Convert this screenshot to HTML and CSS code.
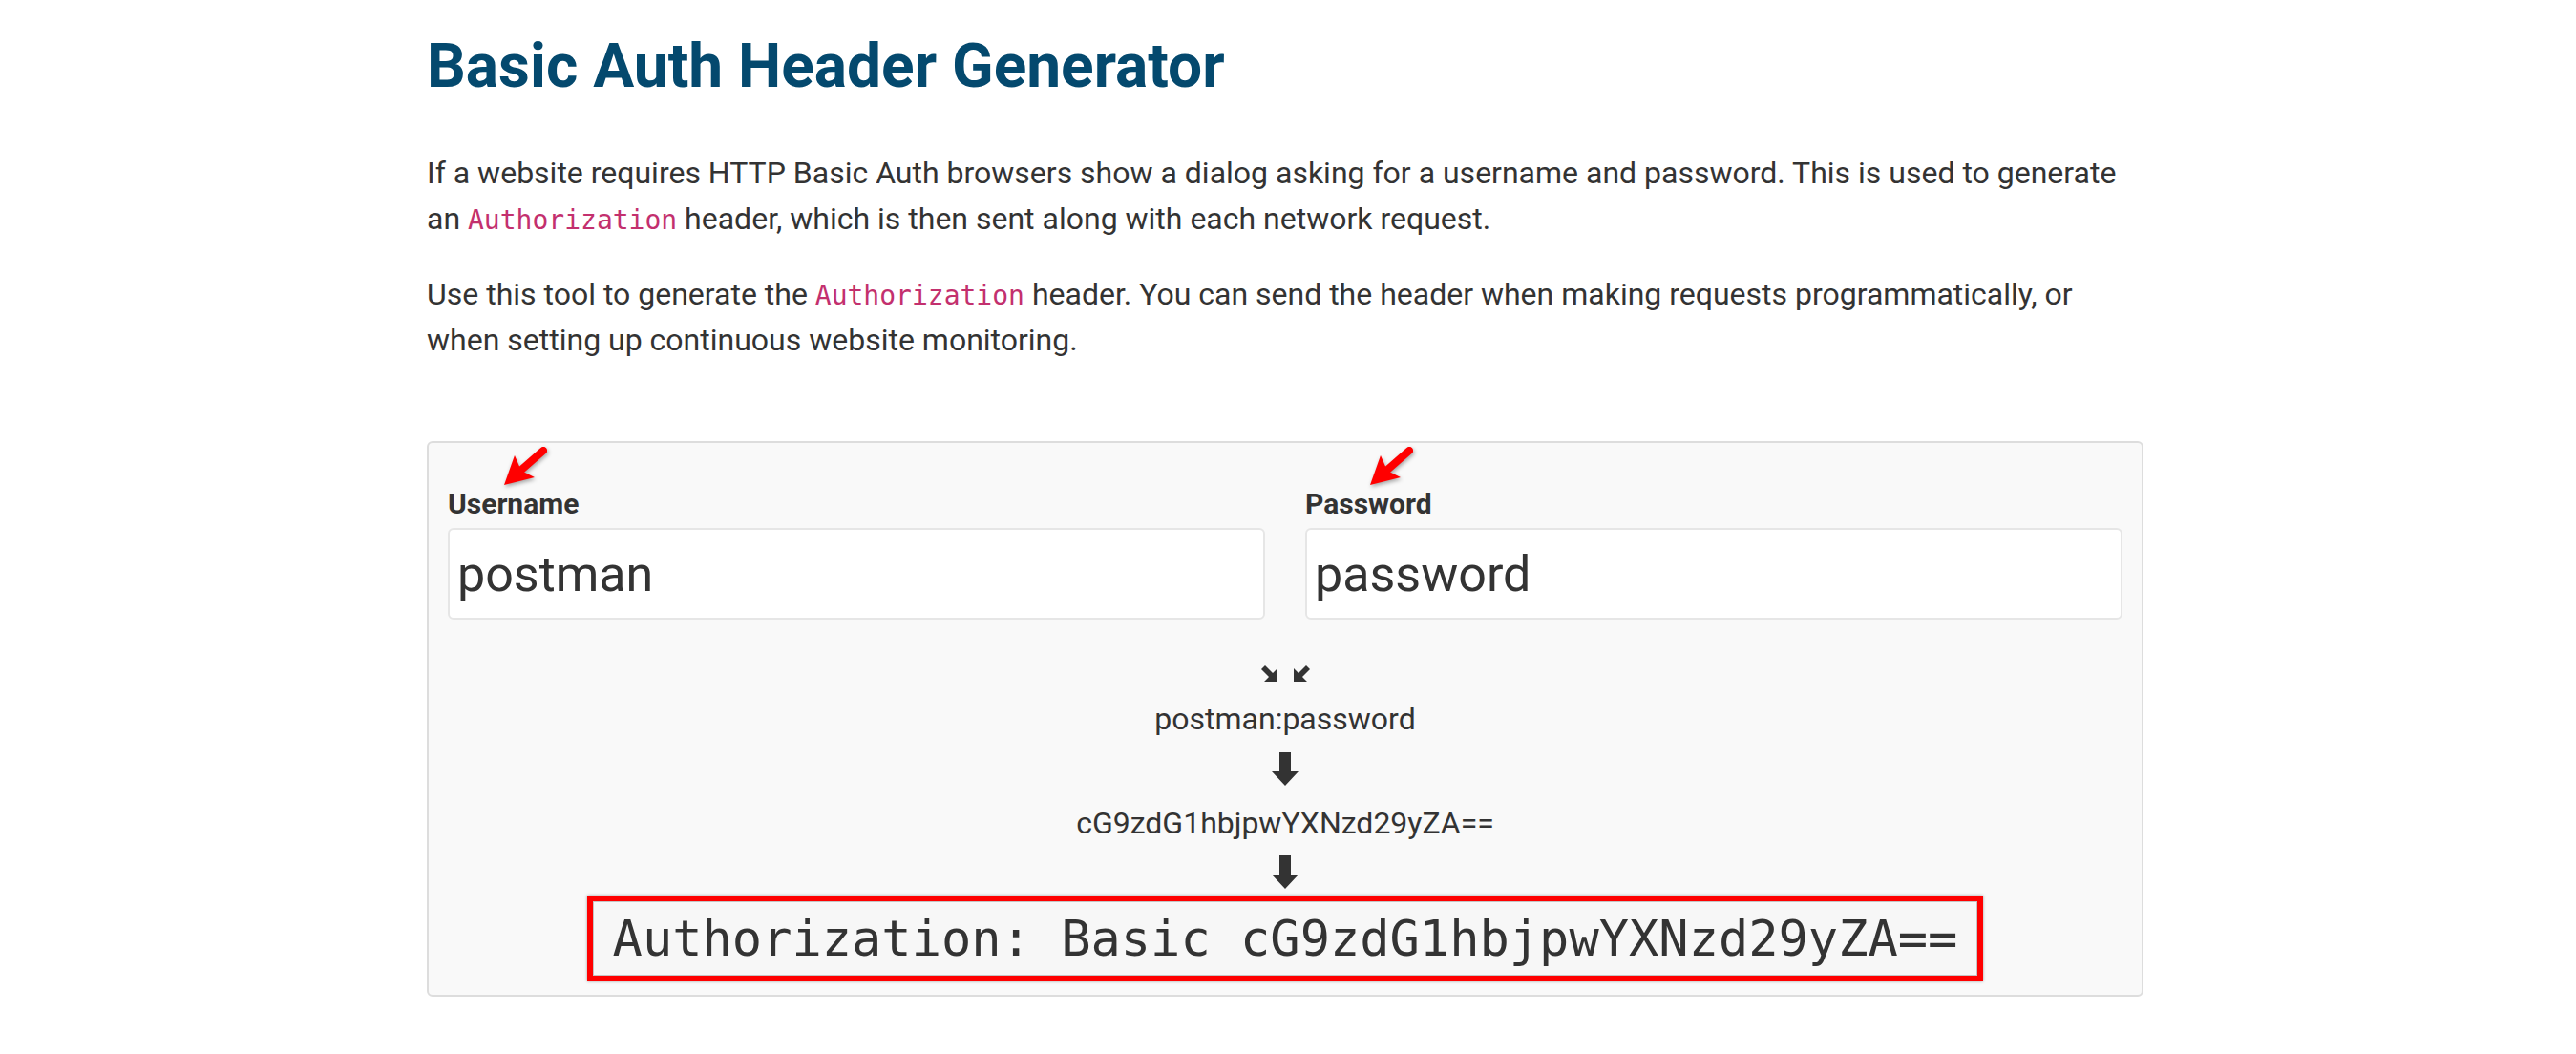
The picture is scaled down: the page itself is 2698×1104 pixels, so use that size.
FILE: index.html
```html
<!DOCTYPE html>
<html lang="en">
<head>
  <meta charset="UTF-8">
  <meta name="viewport" content="width=device-width, initial-scale=1.0">
  <title>Basic Auth Header Generator</title>
  <link rel="stylesheet" href="styles.css">
</head>
<body>
  <div class="page">
    <h1 class="title">Basic Auth Header Generator</h1>

    <p class="lead">If a website requires HTTP Basic Auth browsers show a dialog asking for a username and password. This is used to generate an <code>Authorization</code> header, which is then sent along with each network request.</p>

    <p class="lead">Use this tool to generate the <code>Authorization</code> header. You can send the header when making requests programmatically, or when setting up continuous website monitoring.</p>

    <div class="panel">
      <div class="fields">
        <div class="field">
          <label class="field-label" for="username">Username
            <svg class="pointer pointer--user" width="60" height="50" viewBox="0 0 60 50">
              <line x1="26" y1="31" x2="50" y2="10" stroke="#f00" stroke-width="8" stroke-linecap="round"/>
              <polygon points="9,46 20,15 27,31 41,38" fill="#f00"/>
            </svg>
          </label>
          <input class="field-input" id="username" type="text" value="postman">
        </div>
        <div class="field">
          <label class="field-label" for="password">Password
            <svg class="pointer pointer--pass" width="60" height="50" viewBox="0 0 60 50">
              <line x1="26" y1="31" x2="50" y2="10" stroke="#f00" stroke-width="8" stroke-linecap="round"/>
              <polygon points="9,46 20,15 27,31 41,38" fill="#f00"/>
            </svg>
          </label>
          <input class="field-input" id="password" type="text" value="password">
        </div>
      </div>

      <div class="flow">
        <div class="merge">
          <svg width="18" height="17" viewBox="0 0 18 17"><path d="M0 4 L4 0 L12 8 L17 3 L17 17 L3 17 L8 12 Z" fill="#333"/></svg>
          <svg width="18" height="17" viewBox="0 0 18 17"><path d="M18 4 L14 0 L6 8 L1 3 L1 17 L15 17 L10 12 Z" fill="#333"/></svg>
        </div>
        <div class="flow-text" id="joined">postman:password</div>
        <svg class="down" width="28" height="35" viewBox="0 0 28 35"><path d="M8 0 H20 V20 H28 L14 35 L0 20 H8 Z" fill="#333"/></svg>
        <div class="flow-text" id="encoded">cG9zdG1hbjpwYXNzd29yZA==</div>
        <svg class="down down--last" width="28" height="35" viewBox="0 0 28 35"><path d="M8 0 H20 V20 H28 L14 35 L0 20 H8 Z" fill="#333"/></svg>
        <div class="result">
          <code class="result-code" id="header">Authorization: Basic cG9zdG1hbjpwYXNzd29yZA==</code>
        </div>
      </div>
    </div>
  </div>

  <script>
    // Rebuild the header whenever one of the fields changes
    function update() {
      const user = document.getElementById("username").value;
      const pass = document.getElementById("password").value;
      const joined = user + ":" + pass;
      const encoded = btoa(joined);

      document.getElementById("joined").innerText = joined;
      document.getElementById("encoded").innerText = encoded;
      document.getElementById("header").innerText = "Authorization: Basic " + encoded;
    }

    document.getElementById("username").addEventListener("input", update);
    document.getElementById("password").addEventListener("input", update);
  </script>
</body>
</html>
```

FILE: styles.css
```css
/* Global Styles */
* {
  box-sizing: border-box;
}

body {
  margin: 0;
  background: #ffffff;
  color: #333;
  font-family: Roboto, 'Noto Sans', sans-serif;
}

.page {
  width: 1798px;
  margin-left: 447px;
}

.title {
  margin: 35px 0 52px;
  font-size: 64px;
  line-height: 1.1;
  font-weight: 700;
  color: #04496e;
}

.lead {
  max-width: 1780px;
  margin: 0 0 31px;
  font-size: 32px;
  line-height: 48px;
}

code {
  font-family: 'DejaVu Sans Mono', monospace;
  font-size: 28px;
  line-height: 1;
  color: #c3306e;
}

/* Form panel */
.panel {
  margin-top: 82px;
  padding: 44px 20px 14px;
  background: #f9f9f9;
  border: 2px solid #dddddd;
  border-radius: 6px;
}

.fields {
  display: grid;
  grid-template-columns: 1fr 1fr;
  gap: 42px;
}

.field-label {
  position: relative;
  display: block;
  margin-bottom: 5px;
  font-size: 30px;
  line-height: 40px;
  font-weight: 700;
}

.pointer {
  position: absolute;
  top: -46px;
  filter: drop-shadow(1px 2px 2px rgba(0, 0, 0, 0.35));
}

.pointer--user {
  left: 50px;
}

.pointer--pass {
  left: 59px;
}

.field-input {
  display: block;
  width: 100%;
  height: 96px;
  padding: 0 8px;
  font-family: Roboto, 'Noto Sans', sans-serif;
  font-size: 52px;
  color: #333;
  background: #ffffff;
  border: 2px solid #e6e6e6;
  border-radius: 6px;
  outline: none;
}

/* Encoding steps */
.flow {
  display: flex;
  flex-direction: column;
  align-items: center;
  margin-top: 48px;
}

.merge {
  display: flex;
  gap: 15px;
  height: 17px;
}

.merge svg {
  display: block;
}

.flow-text {
  margin-top: 19px;
  font-size: 32px;
  line-height: 40px;
}

.down {
  display: block;
  margin-top: 15px;
}

.down--last {
  margin-top: 14px;
}

.result {
  margin-top: 7px;
  border: 6px solid #ff0000;
  box-shadow: 0 0 3px rgba(0, 0, 0, 0.35);
}

.result-code {
  display: block;
  padding: 0 20px;
  font-size: 52px;
  line-height: 76px;
  color: #333;
  background: #f7f7f7;
  border: 1px solid #c4c4c4;
}
```
